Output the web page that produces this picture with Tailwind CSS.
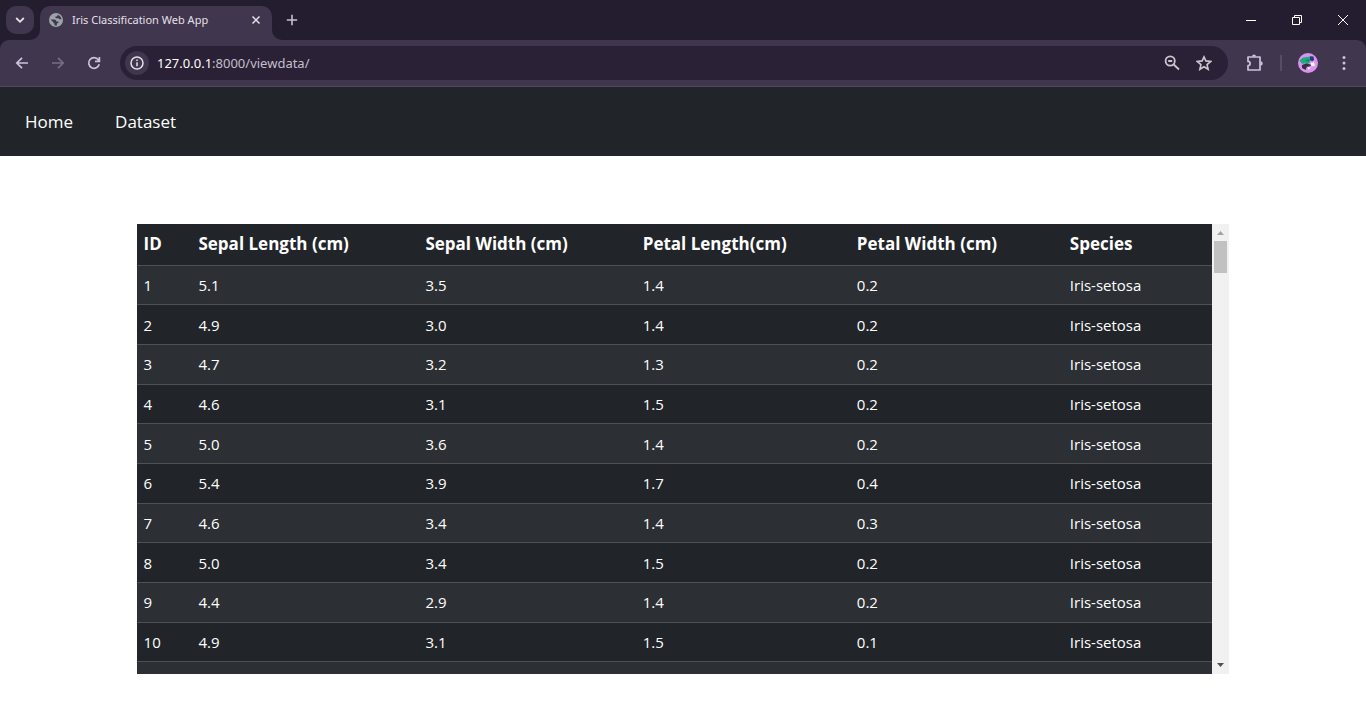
<!DOCTYPE html>
<html lang="en">
<head>
<meta charset="utf-8">
<meta name="viewport" content="width=device-width, initial-scale=1">
<title>Iris Classification Web App</title>
<script src="https://cdn.jsdelivr.net/npm/@tailwindcss/browser@4"></script>
</head>
<body class="flex h-screen flex-col overflow-hidden bg-white font-['Open_Sans',sans-serif]">
<header class="shrink-0 bg-[#241c2f] font-['Noto_Sans',sans-serif] text-[#e5e0ea]">
  <div class="flex h-10 items-start pl-[6px]">
    <button aria-label="Search tabs" class="mt-[6px] flex h-7 w-7 items-center justify-center rounded-[10px] bg-[#40364d]">
      <svg class="h-[10px] w-[10px]" viewBox="0 0 10 10" fill="none" stroke="currentColor" stroke-width="1.8"><path d="M1.2 3 5 6.8 8.8 3"/></svg>
    </button>
    <div class="relative ml-[6px] mt-[6px] flex h-[34px] w-[232px] items-center rounded-t-[10px] bg-[#40364d] pb-[6px] pl-[9px] pr-[10px]">
      <svg class="absolute -left-[10px] bottom-0 h-[10px] w-[10px]" viewBox="0 0 10 10"><path fill="#40364d" d="M10 0v10H0A10 10 0 0 0 10 0"/></svg>
      <svg class="absolute -right-[10px] bottom-0 h-[10px] w-[10px]" viewBox="0 0 10 10"><path fill="#40364d" d="M0 0v10h10A10 10 0 0 1 0 0"/></svg>
      <svg class="h-[14px] w-[14px] shrink-0" viewBox="0 0 14 14"><circle cx="7" cy="7" r="7" fill="#9ba5a9"/><path fill="#40364d" d="M8.600 1.700A5.600 5.600 0 0 1 12.500 6.200H10.600Q9.800 6.200 9.700 5.200H7.400Q6.400 5.200 6.400 4.200V3.400H7.600Q8.700 3.200 8.600 1.700M1.500 6.600H5Q7.400 6.600 7.400 8.400H9Q9.700 8.500 9.500 9.400Q9.400 10.400 7.900 10.300V12.500A5.600 5.600 0 0 1 5.500 12.300V10.600Q4.300 10.500 4.300 9.200Z"/></svg>
      <span class="ml-[9px] flex-1 whitespace-nowrap text-[11px] leading-4">Iris Classification Web App</span>
      <button aria-label="Close tab" class="flex h-3 w-3 items-center justify-center"><svg class="h-[10px] w-[10px]" viewBox="0 0 10 10" stroke="currentColor" stroke-width="1.5"><path d="m1.500 1.500 7 7m0-7-7 7"/></svg></button>
    </div>
    <button aria-label="New tab" class="ml-[14px] mt-[14px] h-3 w-3 text-[#c8bdd8]"><svg viewBox="0 0 12 12" stroke="currentColor" stroke-width="1.6"><path d="M6 .8v10.400M.8 6h10.400"/></svg></button>
    <div class="ml-auto flex h-10 text-white">
      <button aria-label="Minimize" class="flex w-[46px] items-center justify-center"><svg class="h-[10px] w-[10px]" viewBox="0 0 10 10"><path fill="currentColor" d="M0 5h10v1H0z"/></svg></button>
      <button aria-label="Restore" class="flex w-[46px] items-center justify-center"><svg class="h-[10px] w-[10px]" viewBox="0 0 10 10" fill="none" stroke="currentColor"><path d="M.5 2.500h7v7h-7zM2.500 2.500v-2h7v7h-2"/></svg></button>
      <button aria-label="Close" class="flex w-[46px] items-center justify-center"><svg class="h-[10px] w-[10px]" viewBox="0 0 10 10" stroke="currentColor"><path d="m0 0 10 10M10 0 0 10"/></svg></button>
    </div>
  </div>
  <div class="flex h-[47px] items-center rounded-t-[9px] border-b border-[#514a5b] bg-[#40364d] pl-[14px] pr-[14px]">
    <button aria-label="Back" class="h-4 w-4 text-[#cdc2dc]"><svg viewBox="0 0 16 16" fill="none" stroke="currentColor" stroke-width="1.700"><path d="M14 8H3M8 2.800 2.800 8 8 13.200"/></svg></button>
    <button aria-label="Forward" class="ml-5 h-4 w-4 text-[#776d84]"><svg viewBox="0 0 16 16" fill="none" stroke="currentColor" stroke-width="1.700"><path d="M2 8h11M8 2.800 13.200 8 8 13.200"/></svg></button>
    <button aria-label="Reload" class="ml-5 h-4 w-4 text-[#cdc2dc]"><svg viewBox="0 0 16 16" fill="none" stroke="currentColor" stroke-width="1.700"><path d="M13.200 9.200A5.300 5.300 0 1 1 12.300 4.800L13.200 6M13.400 2v4.300H9"/></svg></button>
    <div class="ml-[18px] flex h-[34px] flex-1 items-center rounded-full bg-[#2a2136] pl-[5px] pr-4">
      <button aria-label="Site information" class="flex h-6 w-6 items-center justify-center rounded-full bg-[#40364d]"><svg class="h-[14px] w-[14px]" viewBox="0 0 14 14" fill="none" stroke="currentColor" stroke-width="1.500"><circle cx="7" cy="7" r="6"/><path d="M7 6.200v4M7 3.500v1.600"/></svg></button>
      <input aria-label="Address" id="url" class="sr-only" value="127.0.0.1:8000/viewdata/">
      <label for="url" class="ml-2 flex-1 text-[13px] leading-5 text-[#c4bfca]"><span class="text-white">127.0.0.1</span>:8000/viewdata/</label>
      <button aria-label="Zoom" class="h-4 w-4 text-[#cac6cf]"><svg viewBox="0 0 16 16" fill="none" stroke="currentColor" stroke-width="1.800"><circle cx="6.200" cy="6" r="4.600"/><path d="m9.700 9.500 5.300 5M4.200 6h4"/></svg></button>
      <button aria-label="Bookmark this tab" class="ml-4 h-4 w-4 text-[#cac6cf]"><svg viewBox="0 0 16 16" fill="none" stroke="currentColor" stroke-width="1.600"><path d="m8 1.900 1.850 4 4.900.5-3.700 3.200 1.100 4.700L8 11.800l-4.150 2.500 1.100-4.700-3.700-3.200 4.900-.5z"/></svg></button>
    </div>
    <button aria-label="Extensions" class="ml-[18px] h-[18px] w-[18px] text-[#cdc2dc]"><svg viewBox="0 0 18 18" fill="none" stroke="currentColor" stroke-width="1.700" stroke-linejoin="round"><path d="M2 3h12v13H2v-4.400a2.100 2.100 0 0 0 0-4.200z"/><path fill="currentColor" stroke="none" d="M6 2.600a2 2 0 0 1 4 0zM14.500 7.200a2.200 2.200 0 0 1 0 4.400z"/></svg></button>
    <span class="ml-[16px] h-4 w-[2px] bg-[#584d67]"></span>
    <button aria-label="Profile" class="ml-4 h-5 w-5"><svg viewBox="0 0 20 20"><circle cx="10" cy="10" r="10" fill="#dc91f2"/><path fill="#18ad79" d="m1.500 7.500 3.200-2.700 7.500-1.200 1.800 1.100-2.600 5.200-7.300.9z"/><path fill="#243f78" d="m12 3.200 3.500.3.600 3.500-2 1.300-2-1.300z"/><path fill="#34313c" d="m4 12 5-1.800 4.200 1.700-1.600 1.700-2.700.2-1.300 3.200-3.600-2z"/><path fill="#fff" d="m12.500 9.200 1.600.9 1.700-1.300 1.200 3.800-3.300.9zM9.500 14.500h3.200l-2 2.200z"/><path fill="#177c79" d="m7 7.200 5-1-1.600 2.200z"/></svg></button>
    <button aria-label="Browser menu" class="ml-[18px] h-4 w-4 text-[#cdc2dc]"><svg viewBox="0 0 16 16" fill="currentColor"><circle cx="8" cy="2.500" r="1.500"/><circle cx="8" cy="8" r="1.500"/><circle cx="8" cy="13.500" r="1.500"/></svg></button>
  </div>
</header>
<nav class="flex h-[69px] shrink-0 items-center gap-[42px] bg-[#212529] pl-[25px] text-[17px] leading-6 text-white">
  <a href="#">Home</a>
  <a href="#">Dataset</a>
</nav>
<main class="mx-auto mt-[68px] flex h-[450px] w-4/5 shrink-0 overflow-hidden">
  <div class="min-w-0 flex-1 overflow-hidden">
    <table class="h-[478px] w-full table-fixed border-collapse text-left text-[15px] leading-5 text-white [&_td]:px-[7px] [&_td]:pb-0 [&_th]:px-[7px] [&_tr]:border-b [&_tr]:border-[#4d5154]">
      <colgroup><col class="w-[5.1%]"><col class="w-[21.1%]"><col class="w-[20.2%]"><col class="w-[19.9%]"><col class="w-[19.8%]"><col></colgroup>
      <thead class="bg-[#212529] text-[17px] leading-6"><tr class="h-[41px]"><th>ID</th><th>Sepal Length (cm)</th><th>Sepal Width (cm)</th><th>Petal Length(cm)</th><th>Petal Width (cm)</th><th>Species</th></tr></thead>
      <tbody>
        <tr class="bg-[#2c3034]"><td>1</td><td>5.1</td><td>3.5</td><td>1.4</td><td>0.2</td><td>Iris-setosa</td></tr>
        <tr class="bg-[#212529]"><td>2</td><td>4.9</td><td>3.0</td><td>1.4</td><td>0.2</td><td>Iris-setosa</td></tr>
        <tr class="bg-[#2c3034]"><td>3</td><td>4.7</td><td>3.2</td><td>1.3</td><td>0.2</td><td>Iris-setosa</td></tr>
        <tr class="bg-[#212529]"><td>4</td><td>4.6</td><td>3.1</td><td>1.5</td><td>0.2</td><td>Iris-setosa</td></tr>
        <tr class="bg-[#2c3034]"><td>5</td><td>5.0</td><td>3.6</td><td>1.4</td><td>0.2</td><td>Iris-setosa</td></tr>
        <tr class="bg-[#212529]"><td>6</td><td>5.4</td><td>3.9</td><td>1.7</td><td>0.4</td><td>Iris-setosa</td></tr>
        <tr class="bg-[#2c3034]"><td>7</td><td>4.6</td><td>3.4</td><td>1.4</td><td>0.3</td><td>Iris-setosa</td></tr>
        <tr class="bg-[#212529]"><td>8</td><td>5.0</td><td>3.4</td><td>1.5</td><td>0.2</td><td>Iris-setosa</td></tr>
        <tr class="bg-[#2c3034]"><td>9</td><td>4.4</td><td>2.9</td><td>1.4</td><td>0.2</td><td>Iris-setosa</td></tr>
        <tr class="bg-[#212529]"><td>10</td><td>4.9</td><td>3.1</td><td>1.5</td><td>0.1</td><td>Iris-setosa</td></tr>
        <tr class="bg-[#2c3034]"><td>&nbsp;</td><td></td><td></td><td></td><td></td><td></td></tr>
      </tbody>
    </table>
  </div>
  <div class="flex w-[17px] shrink-0 flex-col items-center bg-[#f1f1f1]">
    <svg class="h-[17px] w-[17px] shrink-0" viewBox="0 0 17 17"><path fill="#a3a3a3" d="M5 11h7L8.500 7z"/></svg>
    <div class="h-8 w-[13px] bg-[#c1c1c1]"></div>
    <svg class="mt-auto h-[17px] w-[17px] shrink-0" viewBox="0 0 17 17"><path fill="#505050" d="M5 6h7l-3.500 4z"/></svg>
  </div>
</main>
</body>
</html>
